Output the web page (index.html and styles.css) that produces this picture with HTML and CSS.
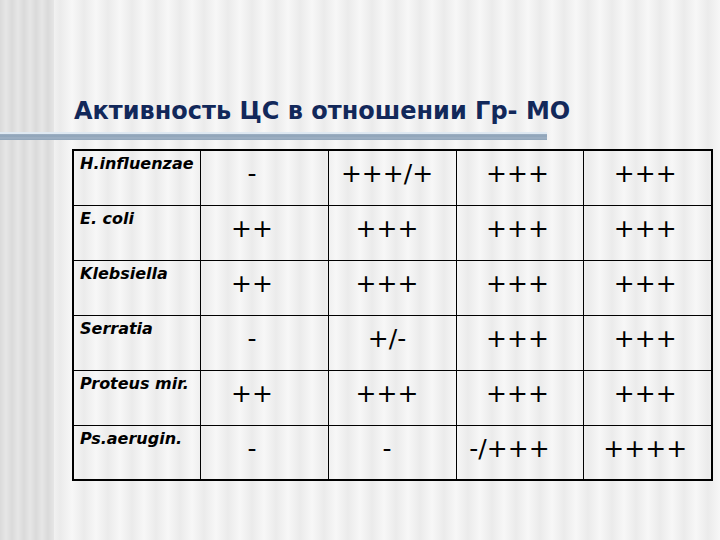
FILE: index.html
```html
<!DOCTYPE html>
<html lang="ru">
<head>
<meta charset="utf-8">
<title>Активность ЦС</title>
<link rel="stylesheet" href="styles.css">
</head>
<body>
<div class="slide">
  <h1 class="title">Активность ЦС в отношении Гр- МО</h1>
  <div class="rule"></div>
  <table class="grid">
    <colgroup>
      <col class="c1"><col class="c2"><col class="c3"><col class="c4"><col class="c5">
    </colgroup>
    <tr><td class="org">H.influenzae</td><td class="v v2">-</td><td class="v v3">+++/+</td><td class="v v4">+++</td><td class="v v5">+++</td></tr>
    <tr><td class="org">E. coli</td><td class="v v2">++</td><td class="v v3">+++</td><td class="v v4">+++</td><td class="v v5">+++</td></tr>
    <tr><td class="org">Klebsiella</td><td class="v v2">++</td><td class="v v3">+++</td><td class="v v4">+++</td><td class="v v5">+++</td></tr>
    <tr><td class="org">Serratia</td><td class="v v2">-</td><td class="v v3">+/-</td><td class="v v4">+++</td><td class="v v5">+++</td></tr>
    <tr><td class="org">Proteus mir.</td><td class="v v2">++</td><td class="v v3">+++</td><td class="v v4">+++</td><td class="v v5">+++</td></tr>
    <tr><td class="org">Ps.aerugin.</td><td class="v v2">-</td><td class="v v3">-</td><td class="v v4 wide">-/+++</td><td class="v v5">++++</td></tr>
  </table>
</div>
</body>
</html>
```
FILE: styles.css
```css
html, body {
  margin: 0;
  padding: 0;
}
body {
  width: 720px;
  height: 540px;
  overflow: hidden;
  background-color: #f2f2f2;
  background-image:
    repeating-linear-gradient(90deg, #dadada 0px, #e6e6e6 6px, #dadada 12px),
    repeating-linear-gradient(90deg, #f7f7f7 0px, #ebebeb 12px, #f7f7f7 24px);
  background-size: 54px 100%, 100% 100%;
  background-repeat: no-repeat, repeat;
}
.slide {
  display: flex;
  flex-direction: column;
  padding-top: 97px;
}
.title {
  margin: 0 0 0 74px;
  font-family: "DejaVu Sans", Verdana, sans-serif;
  font-weight: bold;
  font-size: 24px;
  line-height: 28px;
  color: #12285a;
}
.rule {
  margin-top: 7px;
  width: 547px;
  height: 8px;
  background: linear-gradient(180deg, #dfe9f2 0px, #dfe9f2 2px, #9fb1c4 2px, #8ea3b8 4px, #9fb1c4 6px, #8ea3b8 8px);
}
.grid {
  margin: 9px 0 0 72px;
  border-collapse: collapse;
  border: 2px solid #000;
  table-layout: fixed;
  width: 639px;
}
.c1 { width: 127px; }
.c2 { width: 128px; }
.c3 { width: 128px; }
.c4 { width: 127px; }
.c5 { width: 129px; }
.grid td {
  border: 1px solid #000;
  height: 55px;
  box-sizing: border-box;
  vertical-align: top;
  padding: 0;
}
.org {
  font-family: "DejaVu Sans", Verdana, sans-serif;
  font-weight: bold;
  font-style: italic;
  font-size: 16px;
  line-height: 18px;
  padding: 4px 0 0 6px !important;
  color: #000;
  white-space: nowrap;
}
.v {
  font-family: "DejaVu Sans", Verdana, sans-serif;
  font-size: 25px;
  line-height: 29px;
  text-align: center;
  padding-top: 8px !important;
  color: #000;
  white-space: nowrap;
}
.v2 { padding-right: 24px !important; }
.v3 { padding-right: 10px !important; }
.v4 { padding-right: 4px !important; }
.v5 { padding-right: 4px !important; }
.v4.wide { padding-right: 20px !important; }
```
